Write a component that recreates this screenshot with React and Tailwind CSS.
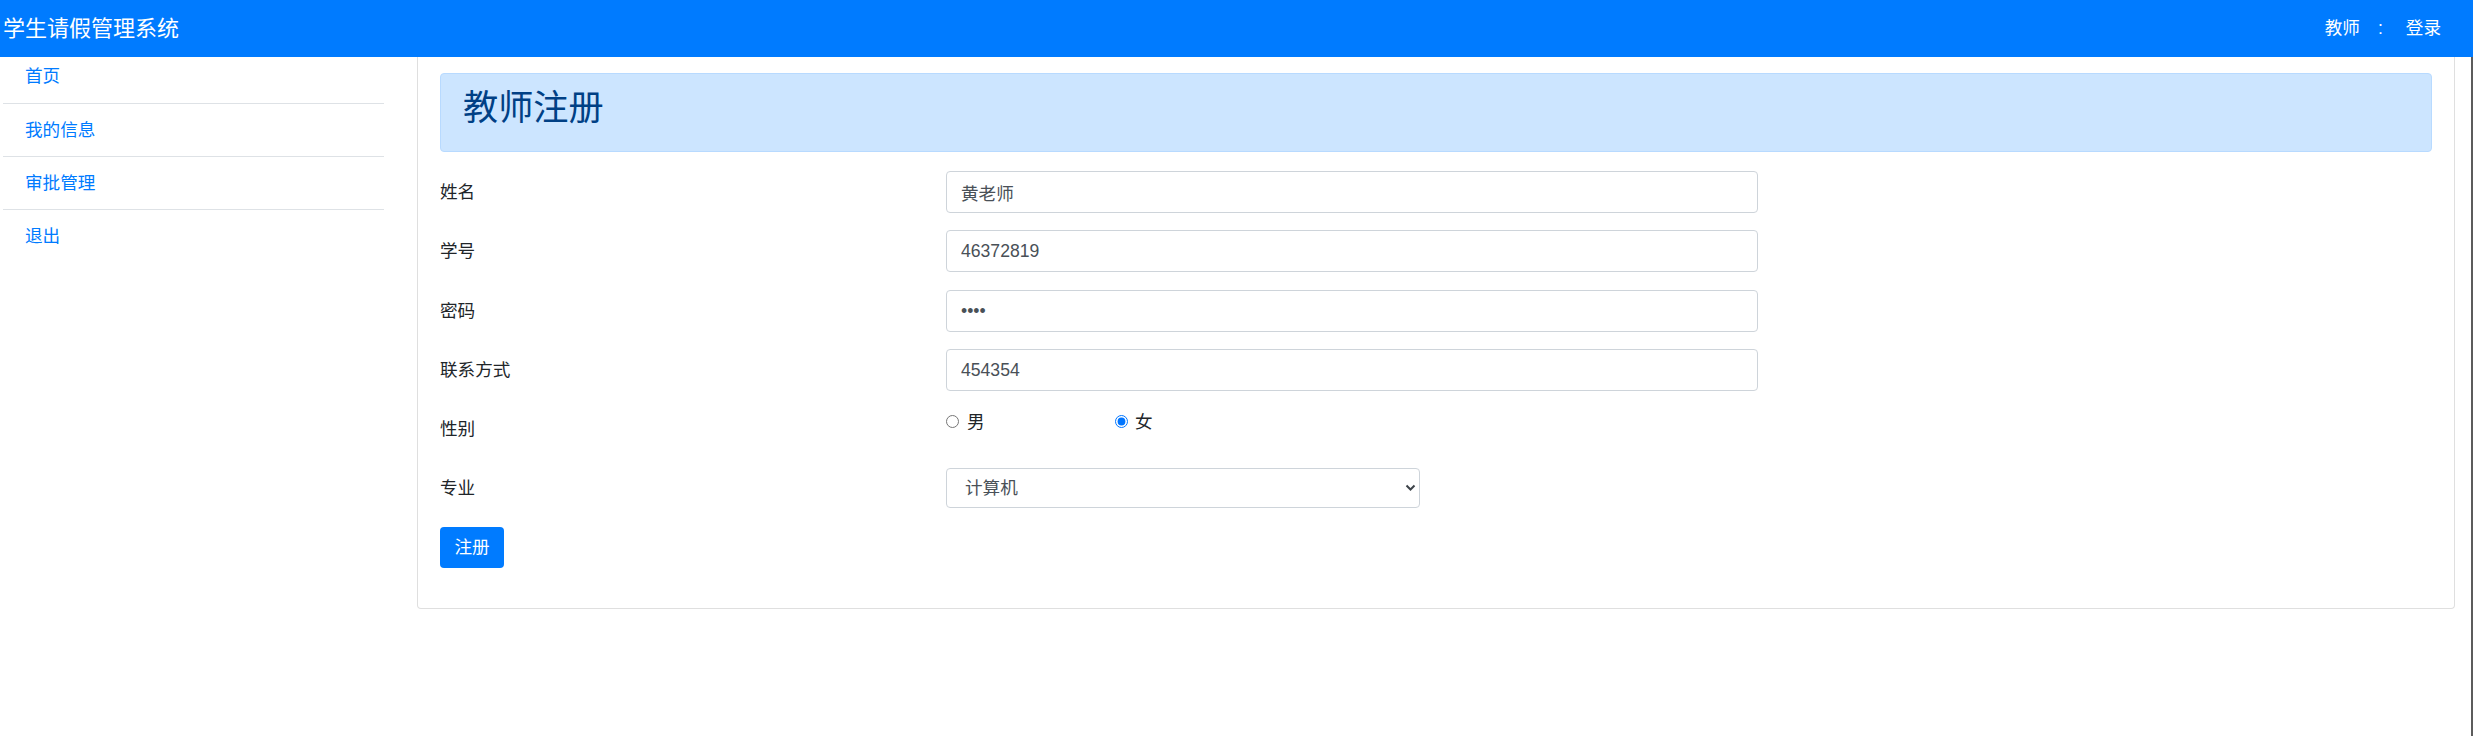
import React from 'react';

const menu = ['首页', '我的信息', '审批管理', '退出'];

const fields = [
  { label: '姓名', type: 'text', value: '黄老师', gap: 'mt-0' },
  { label: '学号', type: 'text', value: '46372819', gap: 'mt-[17px]' },
  { label: '密码', type: 'password', value: '1234', gap: 'mt-[18px]' },
  { label: '联系方式', type: 'text', value: '454354', gap: 'mt-[17px]' },
];

export default function App() {
  return (
    <div
      className="min-h-[736px] w-full flex flex-col bg-white text-[17.6px] text-[#212529]"
      style={{ fontFamily: '"Liberation Sans", "Noto Sans CJK SC", sans-serif' }}
    >
      {/* top bar */}
      <header className="h-[57px] bg-[#007bff] flex items-center text-white">
        <span className="pl-[3px] text-[22px] leading-none">学生请假管理系统</span>
        <span className="ml-auto leading-none">教师</span>
        <span className="ml-[18px] leading-none">:</span>
        <span className="ml-[23px] mr-[32px] leading-none">登录</span>
      </header>

      <div className="flex-1 flex border-r-2 border-[#5c5c5c]">
        {/* sidebar */}
        <ul className="ml-[3px] w-[381px] shrink-0">
          {menu.map((m, i) => (
            <li
              key={m}
              className={`flex items-center pl-[22px] text-[#007bff] ${
                i === 0 ? 'h-[47px] pb-[8px]' : 'h-[53px]'
              } ${i < menu.length - 1 ? 'border-b border-[#dee2e6]' : ''}`}
            >
              {m}
            </li>
          ))}
        </ul>

        {/* main card */}
        <div className="ml-[33px] w-[2038px] shrink-0 self-start border-x border-b border-[#dfdfdf] rounded-b-[4px] px-[22px] pt-[16px] pb-[40px]">
          <div className="h-[79px] bg-[#cce5ff] border border-[#b8daff] rounded-[4px] px-[22px] pt-[13px]">
            <h2 className="h-[42px] flex items-center text-[35.2px] font-normal text-[#004085] leading-none">教师注册</h2>
          </div>

          <div className="mt-[19px]">
            {fields.map((f) => (
              <div key={f.label} className={`flex items-center h-[42px] ${f.gap}`}>
                <label className="w-[506px] shrink-0">{f.label}</label>
                <input
                  type={f.type}
                  defaultValue={f.value}
                  readOnly
                  className="w-[812px] h-[42px] border border-[#ced4da] rounded-[4px] pl-[14px] text-[#495057] outline-none"
                />
              </div>
            ))}

            <div className="flex items-start h-[42px] mt-[17px]">
              <label className="w-[506px] shrink-0 h-[42px] flex items-center">性别</label>
              <div className="flex items-center h-[28px]">
                <label className="w-[169px] flex items-center gap-[8px]">
                  <input type="radio" name="sex" className="w-[13px] h-[13px] m-0" />
                  <span>男</span>
                </label>
                <label className="flex items-center gap-[7px]">
                  <input type="radio" name="sex" defaultChecked className="w-[13px] h-[13px] m-0" />
                  <span>女</span>
                </label>
              </div>
            </div>

            <div className="flex items-center h-[40px] mt-[18px]">
              <label className="w-[506px] shrink-0">专业</label>
              <div className="relative w-[474px] h-[40px]">
                <select
                  defaultValue="计算机"
                  className="appearance-none w-full h-full border border-[#ced4da] rounded-[4px] pl-[18px] text-[#495057] bg-white outline-none"
                >
                  <option>计算机</option>
                  <option>软件工程</option>
                  <option>网络工程</option>
                </select>
                <svg
                  className="absolute right-[4px] top-[16px] pointer-events-none"
                  width="11"
                  height="8"
                  viewBox="0 0 11 8"
                >
                  <path d="M1.5 1.5 L5.5 5.5 L9.5 1.5" fill="none" stroke="#3d4349" strokeWidth="2" />
                </svg>
              </div>
            </div>

            <button className="mt-[19px] w-[64px] h-[41px] bg-[#007bff] text-white rounded-[4px] flex items-center justify-center">
              注册
            </button>
          </div>
        </div>
      </div>
    </div>
  );
}
